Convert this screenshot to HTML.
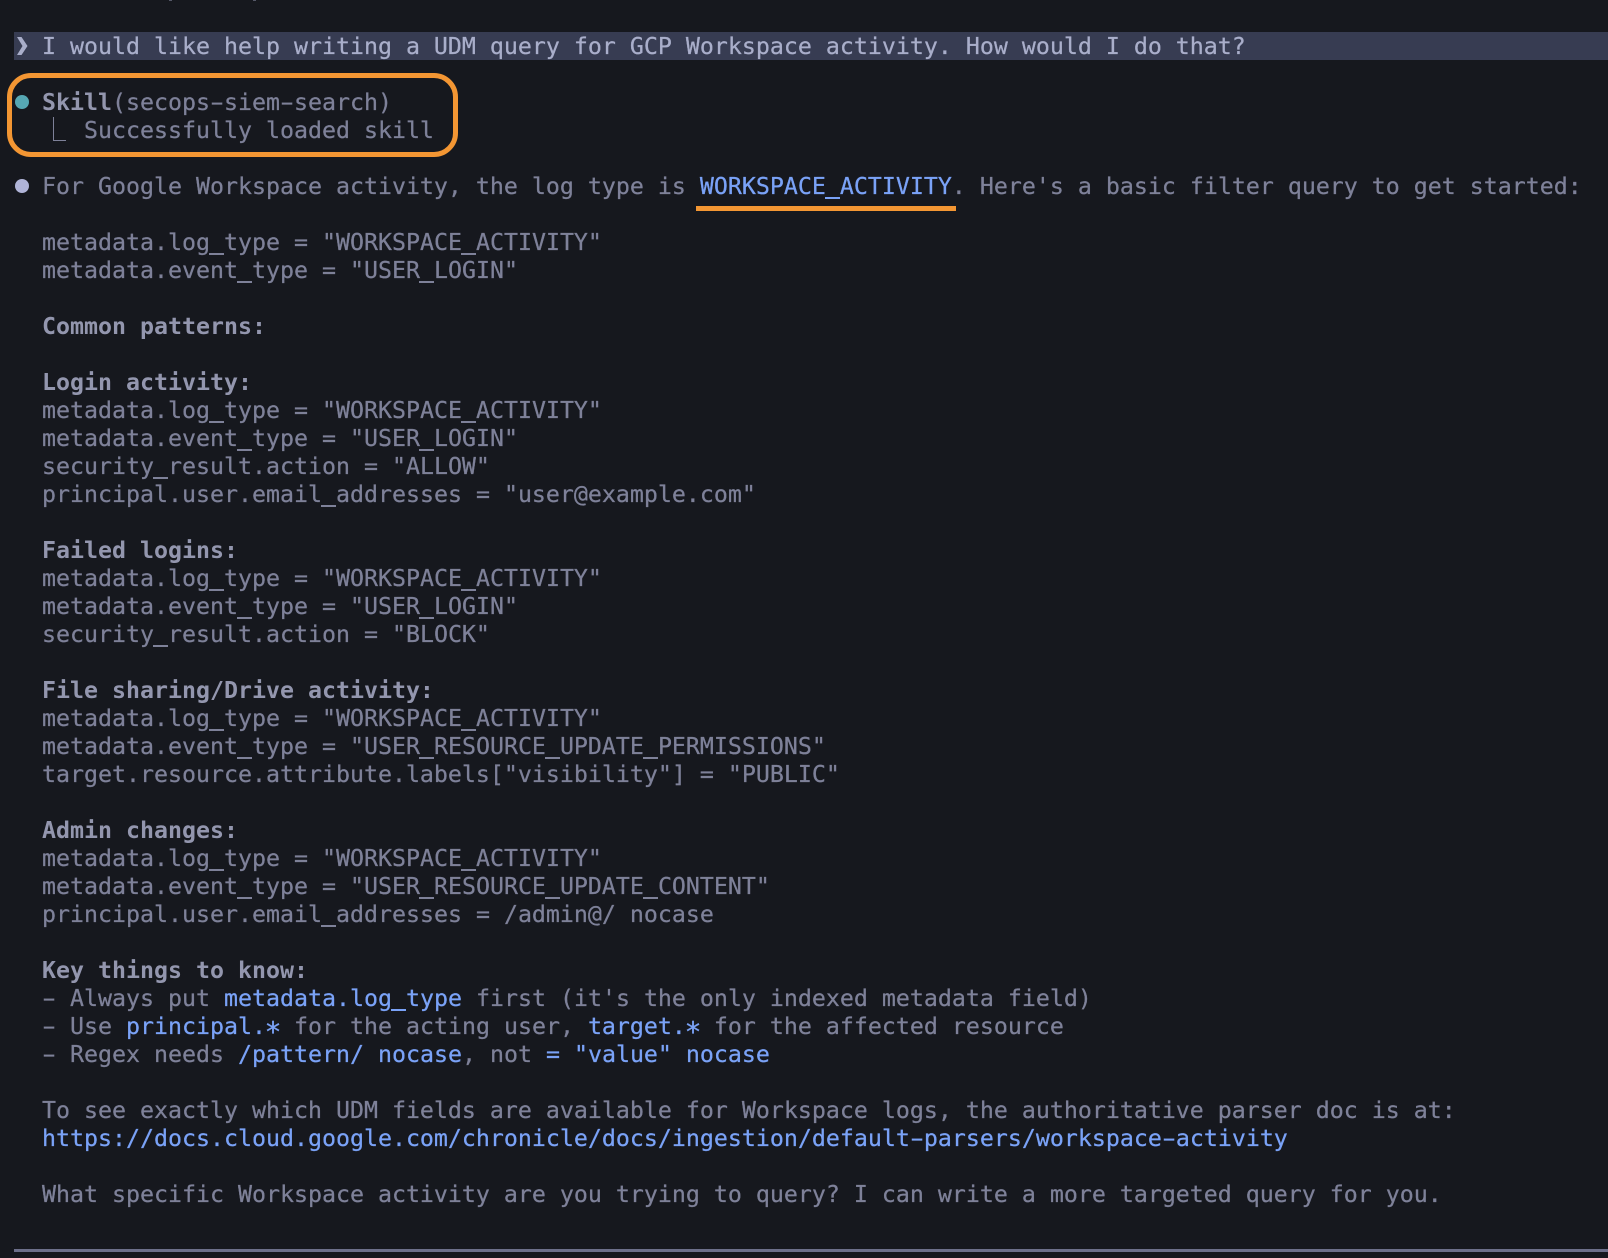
<!DOCTYPE html>
<html lang="en">
<head>
<meta charset="utf-8">
<title>Terminal</title>
<style>
html,body{margin:0;padding:0;background:#16181e;}
body{width:1608px;height:1258px;overflow:hidden;position:relative;}
pre{position:absolute;left:42px;top:33px;margin:0;font-family:"DejaVu Sans Mono","Liberation Mono",monospace;font-size:23.25px;line-height:28px;color:#7e8199;white-space:pre;-webkit-text-stroke:0.25px currentColor;}
b{font-weight:bold;color:#9396ae;-webkit-text-stroke:0;}
i{font-style:normal;color:#7aa2f7;}
.p{color:#a9aeca;}
.h,.a{display:inline-block;line-height:1;}
.h{transform:scaleX(1.7);}
.a{transform:translateY(6px) scale(1.2);}
.u{position:relative;-webkit-text-fill-color:transparent;-webkit-text-stroke:0;}
.u::after{content:"";position:absolute;left:-0.5px;right:-0.5px;bottom:1px;height:2.5px;background:currentColor;}
#bar{position:absolute;left:14px;top:32px;width:1594px;height:28px;background:#373c52;}
#chev{position:absolute;left:15px;top:37px;}
#box{position:absolute;left:7px;top:73px;width:441px;height:74px;border:5px solid #f39633;border-radius:24px;}
#ul{position:absolute;left:696px;top:206px;width:260px;height:5px;background:#f39633;}
.dot{position:absolute;left:15px;width:14px;height:14px;border-radius:50%;}
#l1{position:absolute;left:53px;top:117px;width:12px;height:23px;border-left:1.5px solid #7e8199;border-bottom:1.5px solid #7e8199;}
#rule{position:absolute;left:14px;top:1249px;width:1594px;height:3px;background:#6c6f8a;}
.s{position:absolute;top:0;width:3px;height:1px;background:#555868;}
</style>
</head>
<body>
<div class="s" style="left:169px"></div>
<div class="s" style="left:253px"></div>
<div id="bar"></div>
<svg id="chev" width="14" height="18" viewBox="0 0 14 18"><path d="M2 0H6.5L12.5 9L6.5 18H2L7.5 9Z" fill="#a9aeca"/></svg>
<div id="box"></div>
<div id="ul"></div>
<div class="dot" style="top:95px;background:#56a7b3"></div>
<div class="dot" style="top:179px;background:#b0b4d8"></div>
<div id="l1"></div>
<pre><span class="p">I would like help writing a UDM query for GCP Workspace activity. How would I do that?</span>

<b>Skill</b><span>(secops<span class="h">-</span>siem<span class="h">-</span>search)</span>
   Successfully loaded skill

For Google Workspace activity, the log type is <i>WORKSPACE<span class="u">_</span>ACTIVITY</i>. Here's a basic filter query to get started:

metadata.log<span class="u">_</span>type = "WORKSPACE<span class="u">_</span>ACTIVITY"
metadata.event<span class="u">_</span>type = "USER<span class="u">_</span>LOGIN"

<b>Common patterns:</b>

<b>Login activity:</b>
metadata.log<span class="u">_</span>type = "WORKSPACE<span class="u">_</span>ACTIVITY"
metadata.event<span class="u">_</span>type = "USER<span class="u">_</span>LOGIN"
security<span class="u">_</span>result.action = "ALLOW"
principal.user.email<span class="u">_</span>addresses = "user@example.com"

<b>Failed logins:</b>
metadata.log<span class="u">_</span>type = "WORKSPACE<span class="u">_</span>ACTIVITY"
metadata.event<span class="u">_</span>type = "USER<span class="u">_</span>LOGIN"
security<span class="u">_</span>result.action = "BLOCK"

<b>File sharing/Drive activity:</b>
metadata.log<span class="u">_</span>type = "WORKSPACE<span class="u">_</span>ACTIVITY"
metadata.event<span class="u">_</span>type = "USER<span class="u">_</span>RESOURCE<span class="u">_</span>UPDATE<span class="u">_</span>PERMISSIONS"
target.resource.attribute.labels["visibility"] = "PUBLIC"

<b>Admin changes:</b>
metadata.log<span class="u">_</span>type = "WORKSPACE<span class="u">_</span>ACTIVITY"
metadata.event<span class="u">_</span>type = "USER<span class="u">_</span>RESOURCE<span class="u">_</span>UPDATE<span class="u">_</span>CONTENT"
principal.user.email<span class="u">_</span>addresses = /admin@/ nocase

<b>Key things to know:</b>
<span class="h">-</span> Always put <i>metadata.log<span class="u">_</span>type</i> first (it's the only indexed metadata field)
<span class="h">-</span> Use <i>principal.<span class="a">*</span></i> for the acting user, <i>target.<span class="a">*</span></i> for the affected resource
<span class="h">-</span> Regex needs <i>/pattern/ nocase</i>, not <i>= "value" nocase</i>

To see exactly which UDM fields are available for Workspace logs, the authoritative parser doc is at:
<i>https://docs.cloud.google.com/chronicle/docs/ingestion/default<span class="h">-</span>parsers/workspace<span class="h">-</span>activity</i>

What specific Workspace activity are you trying to query? I can write a more targeted query for you.</pre>
<div id="rule"></div>
</body>
</html>
